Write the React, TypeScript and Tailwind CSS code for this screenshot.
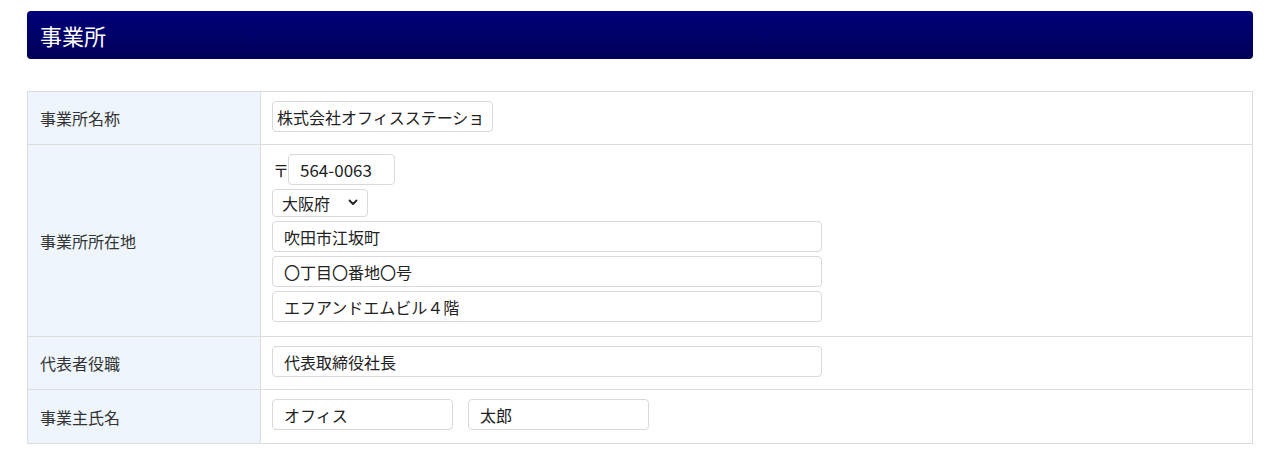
import React from "react";

const font = { fontFamily: '"Noto Sans CJK JP", "Noto Sans", sans-serif' };

function Field({ value, className = "" }: { value: string; className?: string }) {
  return (
    <input
      readOnly
      defaultValue={value}
      className={`block h-[31px] rounded-[4px] border border-[#d9d9d9] bg-white text-[16px] text-[#222] outline-none ${className}`}
    />
  );
}

function Row({
  label,
  children,
  last = false,
  pb = "pb-[12px]",
}: {
  label: string;
  children: React.ReactNode;
  last?: boolean;
  pb?: string;
}) {
  return (
    <div className={`grid grid-cols-[233px_1fr] ${last ? "" : "border-b border-[#dcdcdc]"}`}>
      <div className="flex items-center border-r border-[#dcdcdc] bg-[#eef5fd] pl-[12px] text-[16px] text-[#333]">
        {label}
      </div>
      <div className={`flex flex-col gap-[4px] pl-[11px] pt-[9px] ${pb}`}>{children}</div>
    </div>
  );
}

export default function App() {
  return (
    <div className="min-h-[456px] bg-white px-[27px] pt-[11px]" style={font}>
      <div className="flex h-[48px] items-center rounded-[4px] bg-linear-to-b from-[#00007a] to-[#000058] pl-[13px] text-[22px] text-white">
        事業所
      </div>
      <div className="mt-[32px] border border-[#dcdcdc]">
        <Row label="事業所名称">
          <Field value="株式会社オフィスステーション" className="w-[221px] pl-[4px] pr-[7px]" />
        </Row>
        <Row label="事業所所在地" pb="pb-[14px]">
          <div className="flex items-center">
            <span className="w-[16px] pl-[1px] text-[16px] text-[#222]">〒</span>
            <Field value="564-0063" className="w-[107px] pl-[11px] text-[17px]" />
          </div>
          <div className="relative w-[96px]">
            <select
              defaultValue="大阪府"
              className="block h-[28px] w-[96px] appearance-none rounded-[4px] border border-[#d9d9d9] bg-white pl-[9px] text-[16px] text-[#222] outline-none"
            >
              <option>大阪府</option>
            </select>
            <svg
              className="pointer-events-none absolute right-[10px] top-[10px]"
              width="10"
              height="7"
              viewBox="0 0 10 7"
              fill="none"
            >
              <path d="M1.5 1.5L5 5L8.5 1.5" stroke="#222" strokeWidth="1.8" strokeLinecap="round" strokeLinejoin="round" />
            </svg>
          </div>
          <Field value="吹田市江坂町" className="w-[550px] pl-[11px]" />
          <Field value="〇丁目〇番地〇号" className="w-[550px] pl-[11px]" />
          <Field value="エフアンドエムビル４階" className="w-[550px] pl-[11px]" />
        </Row>
        <Row label="代表者役職">
          <Field value="代表取締役社長" className="w-[550px] pl-[11px]" />
        </Row>
        <Row label="事業主氏名" last pb="pb-[13px]">
          <div className="flex gap-[15px]">
            <Field value="オフィス" className="w-[181px] pl-[11px]" />
            <Field value="太郎" className="w-[181px] pl-[11px]" />
          </div>
        </Row>
      </div>
    </div>
  );
}
